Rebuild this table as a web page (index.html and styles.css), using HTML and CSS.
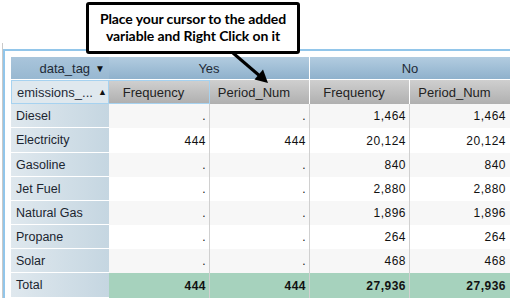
FILE: index.html
```html
<!DOCTYPE html>
<html>
<head>
<meta charset="utf-8">
<link rel="stylesheet" href="styles.css">
</head>
<body>
<div class="stage">
  <div class="frame">
    <div class="panel">
      <div class="pivot">
        <div class="h1 corner">data_tag <span class="arr">&#9660;</span></div>
        <div class="h1 grp">Yes</div>
        <div class="h1 grp last">No</div>

        <div class="rowhdr-head">emissions_... <span class="arr">&#9650;</span></div>
        <div class="h2 sel">Frequency</div>
        <div class="h2">Period_Num</div>
        <div class="h2">Frequency</div>
        <div class="h2 last">Period_Num</div>

        <div class="lbl">Diesel</div><div class="c alt">.</div><div class="c alt">.</div><div class="c alt">1,464</div><div class="c alt last">1,464</div>
        <div class="lbl">Electricity</div><div class="c">444</div><div class="c">444</div><div class="c">20,124</div><div class="c last">20,124</div>
        <div class="lbl">Gasoline</div><div class="c alt">.</div><div class="c alt">.</div><div class="c alt">840</div><div class="c alt last">840</div>
        <div class="lbl">Jet Fuel</div><div class="c">.</div><div class="c">.</div><div class="c">2,880</div><div class="c last">2,880</div>
        <div class="lbl">Natural Gas</div><div class="c alt">.</div><div class="c alt">.</div><div class="c alt">1,896</div><div class="c alt last">1,896</div>
        <div class="lbl">Propane</div><div class="c">.</div><div class="c">.</div><div class="c">264</div><div class="c last">264</div>
        <div class="lbl">Solar</div><div class="c alt">.</div><div class="c alt">.</div><div class="c alt">468</div><div class="c alt last">468</div>
        <div class="lbl">Total</div><div class="c tot">444</div><div class="c tot">444</div><div class="c tot">27,936</div><div class="c tot last">27,936</div>
      </div>
    </div>
  </div>

  <div class="callout">Place your cursor to the added<br>variable and Right Click on it</div>
  <svg class="pointer" width="510" height="100" viewBox="0 0 510 100">
    <line x1="233" y1="53" x2="261" y2="77" stroke="#000" stroke-width="3"/>
    <polygon points="268,83 254.5,79.5 263,69.5" fill="#000"/>
  </svg>
</div>
</body>
</html>
```

FILE: styles.css
```css
html, body {
  margin: 0;
  padding: 0;
  background: #ffffff;
  overflow: hidden;
}

.stage {
  position: relative;
  width: 510px;
  height: 299px;
  overflow: hidden;
  font-family: "Liberation Sans", Arial, sans-serif;
}

.frame {
  margin: 43px 0 0 2px;
  padding-top: 6px;
  border-left: 1px solid #c9c9c9;
}

.panel {
  border-top: 2px solid #92c6ea;
  border-left: 2px solid #92c6ea;
  padding: 6px 0 0 6px;
}

.pivot {
  display: grid;
  grid-template-columns: 98px 101px 100px 100px 100px;
  grid-template-rows: 23px 24px 24px 25px 24px 24px 24px 24px 24px 25px;
  font-size: 12px;
  color: #222;
}

.h1 {
  background: linear-gradient(#b2cce0, #8fb1cc);
  color: #1e2a36;
  font-size: 13px;
  display: flex;
  align-items: center;
  box-sizing: border-box;
  border-bottom: 1px solid #ffffff;
}

.corner {
  background: linear-gradient(#a9c5db, #98b8d1);
  justify-content: flex-end;
  padding-right: 4px;
}

.grp {
  grid-column: span 2;
  justify-content: center;
  border-right: 1px solid #ffffff;
  padding-top: 1px;
}

.grp.last {
  border-right: none;
}

.arr {
  font-size: 10px;
  margin-left: 5px;
  color: #111;
}

.rowhdr-head {
  background: #dfe8ee;
  display: flex;
  align-items: center;
  justify-content: space-between;
  padding: 0 3px 0 5px;
  font-size: 13px;
  color: #1e2a36;
  box-sizing: border-box;
  border: 1px solid #a6d2f0;
}

.rowhdr-head .arr {
  font-size: 9px;
}

.h2 {
  background: linear-gradient(#cfcfcf, #b0b0b0);
  display: flex;
  align-items: center;
  justify-content: center;
  padding-right: 11px;
  font-size: 13px;
  color: #222;
  box-sizing: border-box;
  border-right: 1px solid #ffffff;
}

.h2.sel {
  border: 1px solid #a6d2f0;
  border-left: none;
}

.h2.last {
  border-right: none;
}

.lbl {
  background: linear-gradient(90deg, #dfe8ee, #c5d6e1);
  display: flex;
  align-items: center;
  padding-left: 5px;
  box-sizing: border-box;
  border-bottom: 1px solid #ffffff;
  font-size: 12.5px;
  color: #1b2530;
}

.c {
  background: #ffffff;
  display: flex;
  align-items: center;
  justify-content: flex-end;
  padding-right: 3px;
  box-sizing: border-box;
  border-right: 1px solid #d0d0d0;
  letter-spacing: 0.5px;
  color: #111;
}

.c.alt {
  background: #f7f7f7;
}

.c.tot {
  background: #a6d2bd;
  font-weight: bold;
}

.c.last {
  border-right: none;
  padding-right: 4px;
}

.callout {
  position: absolute;
  left: 86px;
  top: 2px;
  width: 214px;
  height: 52px;
  box-sizing: border-box;
  border: 3px solid #000;
  border-radius: 3px;
  background: #fff;
  font-family: Lato, "Open Sans", sans-serif;
  font-weight: bold;
  font-size: 14px;
  line-height: 17px;
  color: #000;
  text-align: center;
  padding-top: 5px;
  letter-spacing: -0.1px;
}

.pointer {
  position: absolute;
  left: 0;
  top: 0;
}
```
